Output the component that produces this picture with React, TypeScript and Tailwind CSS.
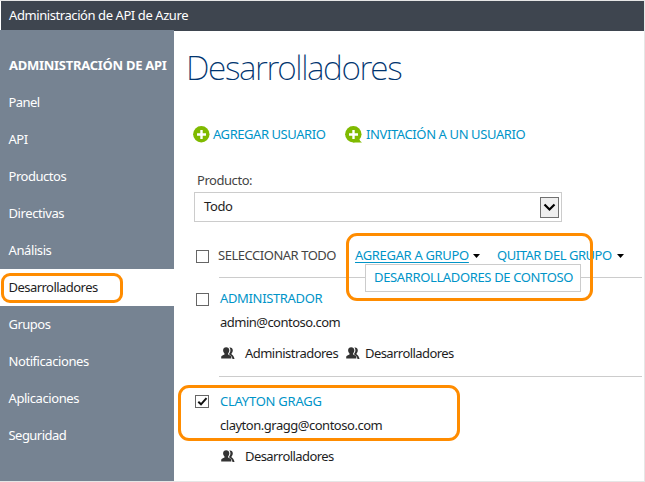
import type { ReactNode } from "react";

const NAV = [
  { label: "Panel", tracking: "tracking-[-0.55px]" },
  { label: "API", tracking: "tracking-[-0.5px]" },
  { label: "Productos", tracking: "tracking-[-0.46px]" },
  { label: "Directivas", tracking: "tracking-[-0.4px]" },
  { label: "Análisis", tracking: "tracking-[-0.4px]" },
  { label: "Desarrolladores", tracking: "tracking-[-0.54px]", active: true },
  { label: "Grupos", tracking: "tracking-[-0.5px]" },
  { label: "Notificaciones", tracking: "tracking-[-0.43px]" },
  { label: "Aplicaciones", tracking: "tracking-[-0.43px]" },
  { label: "Seguridad", tracking: "tracking-[-0.54px]" },
];

function AddIcon({ bubble = false }: { bubble?: boolean }) {
  return (
    <svg width="17" height="17" viewBox="0 0 17 17" className="shrink-0">
      <circle cx="8.3" cy="8.3" r="8.2" fill="#7fba00" />
      {bubble && <path d="M8 16.5H17.2C15.8 15.8 15 15 14.6 13.6L10 12Z" fill="#7fba00" />}
      <path d="M8.5 4v9M4 8.5h9" stroke="#fff" strokeWidth="2.4" fill="none" />
    </svg>
  );
}

function PeopleIcon() {
  return (
    <svg width="14" height="13" viewBox="0 0 14 13" className="shrink-0" fill="#333">
      <path d="M5.2.3C7 .3 8.3 1.5 8.3 3.3c0 1.4-.5 2.5-1.2 3.2v1c1.4.7 2.900 1 3.200 2.200V11.500H.2V9.700C.5 8.500 2 8.200 3.500 7.500v-1C2.700 5.800 2.100 4.700 2.100 3.300 2.100 1.500 3.400.3 5.200.3Z" />
      <path d="M8.300.5c2-.4 3.500.8 3.500 2.800 0 1.300-.5 2.300-1.200 3l-.1.900c1.400 1.100 2.500 1.700 3 4.800h-2c-.3-2.200-1.500-3.200-3.300-4.400V6.500c.8-.7 1.200-1.800 1.200-3.200C9.400 2 9 1.100 8.300.5Z" />
    </svg>
  );
}

function Caret() {
  return (
    <svg width="7" height="4" viewBox="0 0 7 4" className="mt-px shrink-0">
      <path d="M0 0h7L3.5 4Z" fill="#000" />
    </svg>
  );
}

function Checkbox({ checked = false }: { checked?: boolean }) {
  return (
    <span
      className={`flex h-[13px] shrink-0 items-center justify-center border border-[#666] bg-white ${checked ? "mb-px w-[14px]" : "w-[13px]"}`}
    >
      {checked && (
        <svg width="11" height="11" viewBox="0 0 11 11">
          <path d="M1.3 5.8 4 8.3 9.5 2.2" fill="none" stroke="#111" strokeWidth="2" />
        </svg>
      )}
    </span>
  );
}

function Group({ children }: { children: ReactNode }) {
  return (
    <span className="flex items-center gap-[10px]">
      <PeopleIcon />
      {children}
    </span>
  );
}

export default function App() {
  return (
    <div className="relative h-[482px] w-[645px] overflow-hidden border-t border-r border-b border-[#e6e6e6] bg-white font-['Noto_Sans','Open_Sans',sans-serif] text-[13px] leading-5 whitespace-nowrap text-[#1e1e1e]">
      <header className="ml-px flex h-[30px] items-center bg-[#3e454f] pb-0.5 pl-2 text-white">
        <span className="tracking-[-0.42px]">Administración de API de Azure</span>
      </header>

      <div className="flex">
        <nav className="relative -mt-px h-[451px] w-[174px] shrink-0 bg-[#768392] pt-[17px] text-white">
          <div className="flex h-[37px] items-center pb-0.5 pl-[9px] font-bold tracking-[-0.27px]">
            ADMINISTRACIÓN DE API
          </div>
          {NAV.map((item) => (
            <div
              key={item.label}
              className={`flex h-[37px] items-center pb-0.5 pl-[8.5px] ${item.tracking} ${item.active ? "bg-white text-[#1e1e1e]" : ""}`}
            >
              {item.label}
            </div>
          ))}
        </nav>

        <main className="flex w-[470px] flex-col">
          <h1 className="mt-3 ml-[12px] h-[49px] text-[33.5px] leading-[48px] font-extralight tracking-[-1.4px] text-[#00356f]">
            Desarrolladores
          </h1>

          <div className="mt-8 ml-[19px] flex h-5 items-center text-[#0094c8]">
            <AddIcon />
            <span className="ml-[3px] w-[132px] tracking-[-0.44px]">AGREGAR USUARIO</span>
            <AddIcon bubble />
            <span className="ml-[4px] tracking-[-0.39px]">INVITACIÓN A UN USUARIO</span>
          </div>

          <label className="mt-[26px] ml-[23px] h-5 tracking-[-0.45px] text-[#444]">Producto:</label>
          <div className="mt-[2px] ml-5 flex h-[30px] w-[368px] items-center justify-between border border-[#ccc] pr-[2px] pl-[9px]">
            <span className="pb-0.5 tracking-[-0.4px]">Todo</span>
            <span className="flex h-[21px] w-[19px] items-center justify-center border border-[#707070] bg-[#efefef]">
              <svg width="13" height="9" viewBox="0 0 13 9">
                <path d="M1.5 1.5 6.5 6.5 11.5 1.5" fill="none" stroke="#000" strokeWidth="2.2" />
              </svg>
            </span>
          </div>

          <div className="mt-6 ml-[22px] flex h-5 items-center">
            <Checkbox />
            <span className="ml-[9px] w-[137px] pb-0.5 tracking-[-0.47px] text-[#444]">SELECCIONAR TODO</span>
            <span className="flex w-[142px] items-center pb-0.5 text-[#0094c8]">
              <span className="mr-1 tracking-[-0.33px] underline decoration-1 underline-offset-2">AGREGAR A GRUPO</span>
              <Caret />
            </span>
            <span className="flex items-center gap-[5px] pb-0.5 text-[#0094c8]">
              <span className="tracking-[-0.47px]">QUITAR DEL GRUPO</span>
              <Caret />
            </span>
          </div>
          <hr className="mt-[11px] ml-[45px] w-[423px] border-t border-[#ccc]" />

          <div className="mt-[11px] ml-[22px] flex h-5 items-center gap-[11px]">
            <Checkbox />
            <span className="pb-0.5 tracking-[-0.35px] text-[#0094c8]">ADMINISTRADOR</span>
          </div>
          <div className="mt-[3px] ml-[46px] h-5 tracking-[-0.52px]">admin@contoso.com</div>
          <div className="mt-[11px] ml-[47px] flex h-5 items-center">
            <span className="w-[125px]">
              <Group><span className="tracking-[-0.53px]">Administradores</span></Group>
            </span>
            <Group><span className="-ml-[5px] tracking-[-0.57px]">Desarrolladores</span></Group>
          </div>
          <hr className="mt-[13px] ml-[45px] w-[423px] border-t border-[#ccc]" />

          <div className="mt-[15px] ml-[21px] flex h-5 items-center gap-[11px]">
            <Checkbox checked />
            <span className="pb-0.5 tracking-[-0.24px] text-[#0094c8]">CLAYTON GRAGG</span>
          </div>
          <div className="mt-[3px] ml-[46px] h-5 tracking-[-0.48px]">clayton.gragg@contoso.com</div>
          <div className="mt-[11px] ml-[47px] flex h-5 items-center">
            <Group><span className="tracking-[-0.57px]">Desarrolladores</span></Group>
          </div>
        </main>
      </div>

      {/* Open dropdown menu */}
      <div className="absolute top-[263px] left-[365px] flex h-[28px] w-[216px] items-center border border-[#ccc] bg-white pb-0.5 pl-2 tracking-[-0.36px] text-[#0094c8]">
        DESARROLLADORES DE CONTOSO
      </div>

      {/* Highlight callouts */}
      <div className="absolute top-[272px] left-px h-[30px] w-[122px] rounded-[9px] border-3 border-[#ff8c00]" />
      <div className="absolute top-[232px] left-[346px] h-[68px] w-[247px] rounded-[11px] border-3 border-[#ff8c00]" />
      <div className="absolute top-[384px] left-[178px] h-[56px] w-[282px] rounded-[11px] border-3 border-[#ff8c00]" />
    </div>
  );
}
